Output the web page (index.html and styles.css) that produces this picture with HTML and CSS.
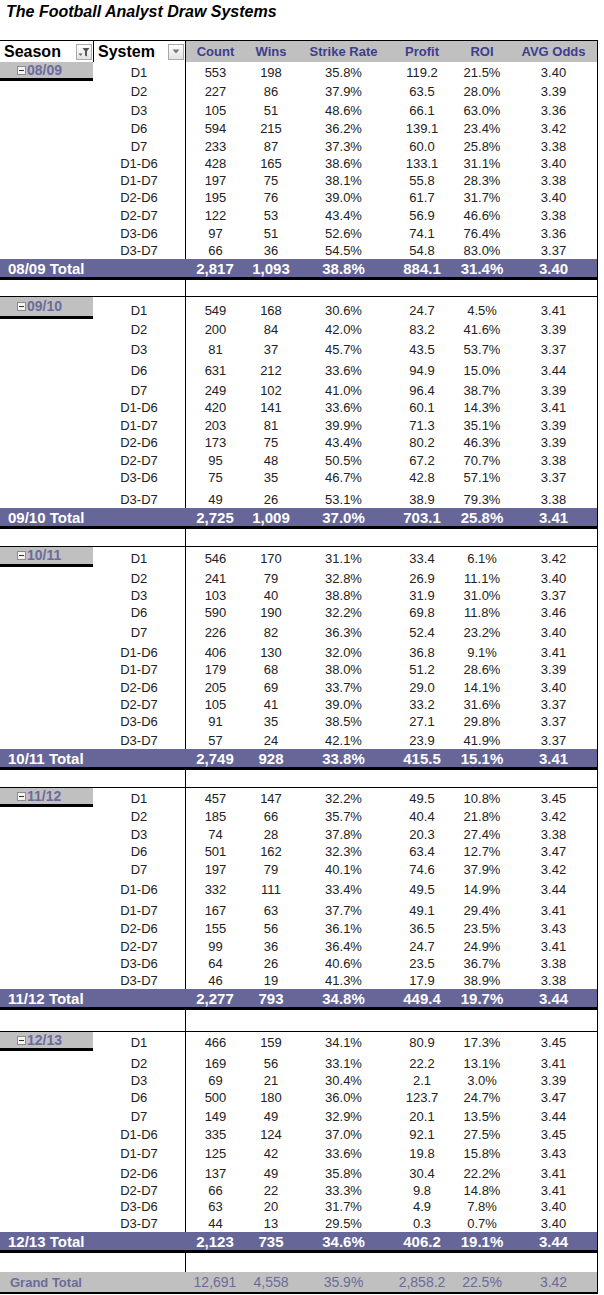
FILE: index.html
```html
<!DOCTYPE html>
<html>
<head>
<meta charset="utf-8">
<title>The Football Analyst Draw Systems</title>
<link rel="stylesheet" href="styles.css">
</head>
<body>
<div class="title">The Football Analyst Draw Systems</div>
<div class="pivot">
  <div class="head">
    <span class="hs">Season<span class="fbtn"><svg width="12" height="12" viewBox="0 0 12 12"><path d="M0.5 7.5h4l-2 2.5z" fill="#666"/><path d="M4.5 2h7L9 5.3V10.5L7 9.4V5.3z" fill="#555"/></svg></span></span>
    <span class="hs sys">System<span class="fbtn"><svg width="8" height="5" viewBox="0 0 8 5"><path d="M0.5 0.5h7L4 4.5z" fill="#7a7a7a"/></svg></span></span>
    <span class="hd first">Count</span><span class="hd">Wins</span><span class="hd">Strike Rate</span><span class="hd">Profit</span><span class="hd">ROI</span><span class="hd">AVG Odds</span>
  </div>

  <!-- 08/09 -->
  <div class="row h19"><span class="season"><i class="mbox"></i>08/09</span><span>D1</span><span>553</span><span>198</span><span>35.8%</span><span>119.2</span><span>21.5%</span><span>3.40</span></div>
  <div class="row h19"><span></span><span>D2</span><span>227</span><span>86</span><span>37.9%</span><span>63.5</span><span>28.0%</span><span>3.39</span></div>
  <div class="row h19"><span></span><span>D3</span><span>105</span><span>51</span><span>48.6%</span><span>66.1</span><span>63.0%</span><span>3.36</span></div>
  <div class="row h18"><span></span><span>D6</span><span>594</span><span>215</span><span>36.2%</span><span>139.1</span><span>23.4%</span><span>3.42</span></div>
  <div class="row h18"><span></span><span>D7</span><span>233</span><span>87</span><span>37.3%</span><span>60.0</span><span>25.8%</span><span>3.38</span></div>
  <div class="row h17"><span></span><span>D1-D6</span><span>428</span><span>165</span><span>38.6%</span><span>133.1</span><span>31.1%</span><span>3.40</span></div>
  <div class="row h17"><span></span><span>D1-D7</span><span>197</span><span>75</span><span>38.1%</span><span>55.8</span><span>28.3%</span><span>3.38</span></div>
  <div class="row h17"><span></span><span>D2-D6</span><span>195</span><span>76</span><span>39.0%</span><span>61.7</span><span>31.7%</span><span>3.40</span></div>
  <div class="row h18"><span></span><span>D2-D7</span><span>122</span><span>53</span><span>43.4%</span><span>56.9</span><span>46.6%</span><span>3.38</span></div>
  <div class="row h18"><span></span><span>D3-D6</span><span>97</span><span>51</span><span>52.6%</span><span>74.1</span><span>76.4%</span><span>3.36</span></div>
  <div class="row h17"><span></span><span>D3-D7</span><span>66</span><span>36</span><span>54.5%</span><span>54.8</span><span>83.0%</span><span>3.37</span></div>
  <div class="total"><span class="lbl">08/09 Total</span><span>2,817</span><span>1,093</span><span>38.8%</span><span>884.1</span><span>31.4%</span><span>3.40</span></div>
  <div class="blank h17"><span></span><span></span><span></span></div>

  <!-- 09/10 -->
  <div class="row h22"><span class="season"><i class="mbox"></i>09/10</span><span>D1</span><span>549</span><span>168</span><span>30.6%</span><span>24.7</span><span>4.5%</span><span>3.41</span></div>
  <div class="row h19"><span></span><span>D2</span><span>200</span><span>84</span><span>42.0%</span><span>83.2</span><span>41.6%</span><span>3.39</span></div>
  <div class="row h20"><span></span><span>D3</span><span>81</span><span>37</span><span>45.7%</span><span>43.5</span><span>53.7%</span><span>3.37</span></div>
  <div class="row h21"><span></span><span>D6</span><span>631</span><span>212</span><span>33.6%</span><span>94.9</span><span>15.0%</span><span>3.44</span></div>
  <div class="row h20"><span></span><span>D7</span><span>249</span><span>102</span><span>41.0%</span><span>96.4</span><span>38.7%</span><span>3.39</span></div>
  <div class="row h17"><span></span><span>D1-D6</span><span>420</span><span>141</span><span>33.6%</span><span>60.1</span><span>14.3%</span><span>3.41</span></div>
  <div class="row h18"><span></span><span>D1-D7</span><span>203</span><span>81</span><span>39.9%</span><span>71.3</span><span>35.1%</span><span>3.39</span></div>
  <div class="row h17"><span></span><span>D2-D6</span><span>173</span><span>75</span><span>43.4%</span><span>80.2</span><span>46.3%</span><span>3.39</span></div>
  <div class="row h18"><span></span><span>D2-D7</span><span>95</span><span>48</span><span>50.5%</span><span>67.2</span><span>70.7%</span><span>3.38</span></div>
  <div class="row h17"><span></span><span>D3-D6</span><span>75</span><span>35</span><span>46.7%</span><span>42.8</span><span>57.1%</span><span>3.37</span></div>
  <div class="row h22"><span></span><span>D3-D7</span><span>49</span><span>26</span><span>53.1%</span><span>38.9</span><span>79.3%</span><span>3.38</span></div>
  <div class="total"><span class="lbl">09/10 Total</span><span>2,725</span><span>1,009</span><span>37.0%</span><span>703.1</span><span>25.8%</span><span>3.41</span></div>
  <div class="blank h18"><span></span><span></span><span></span></div>

  <!-- 10/11 -->
  <div class="row h20"><span class="season"><i class="mbox"></i>10/11</span><span>D1</span><span>546</span><span>170</span><span>31.1%</span><span>33.4</span><span>6.1%</span><span>3.42</span></div>
  <div class="row h20"><span></span><span>D2</span><span>241</span><span>79</span><span>32.8%</span><span>26.9</span><span>11.1%</span><span>3.40</span></div>
  <div class="row h17"><span></span><span>D3</span><span>103</span><span>40</span><span>38.8%</span><span>31.9</span><span>31.0%</span><span>3.37</span></div>
  <div class="row h17"><span></span><span>D6</span><span>590</span><span>190</span><span>32.2%</span><span>69.8</span><span>11.8%</span><span>3.46</span></div>
  <div class="row h20"><span></span><span>D7</span><span>226</span><span>82</span><span>36.3%</span><span>52.4</span><span>23.2%</span><span>3.40</span></div>
  <div class="row h20"><span></span><span>D1-D6</span><span>406</span><span>130</span><span>32.0%</span><span>36.8</span><span>9.1%</span><span>3.41</span></div>
  <div class="row h17"><span></span><span>D1-D7</span><span>179</span><span>68</span><span>38.0%</span><span>51.2</span><span>28.6%</span><span>3.39</span></div>
  <div class="row h18"><span></span><span>D2-D6</span><span>205</span><span>69</span><span>33.7%</span><span>29.0</span><span>14.1%</span><span>3.40</span></div>
  <div class="row h17"><span></span><span>D2-D7</span><span>105</span><span>41</span><span>39.0%</span><span>33.2</span><span>31.6%</span><span>3.37</span></div>
  <div class="row h17"><span></span><span>D3-D6</span><span>91</span><span>35</span><span>38.5%</span><span>27.1</span><span>29.8%</span><span>3.37</span></div>
  <div class="row h19"><span></span><span>D3-D7</span><span>57</span><span>24</span><span>42.1%</span><span>23.9</span><span>41.9%</span><span>3.37</span></div>
  <div class="total"><span class="lbl">10/11 Total</span><span>2,749</span><span>928</span><span>33.8%</span><span>415.5</span><span>15.1%</span><span>3.41</span></div>
  <div class="blank h18"><span></span><span></span><span></span></div>

  <!-- 11/12 -->
  <div class="row h19"><span class="season"><i class="mbox"></i>11/12</span><span>D1</span><span>457</span><span>147</span><span>32.2%</span><span>49.5</span><span>10.8%</span><span>3.45</span></div>
  <div class="row h18"><span></span><span>D2</span><span>185</span><span>66</span><span>35.7%</span><span>40.4</span><span>21.8%</span><span>3.42</span></div>
  <div class="row h18"><span></span><span>D3</span><span>74</span><span>28</span><span>37.8%</span><span>20.3</span><span>27.4%</span><span>3.38</span></div>
  <div class="row h17"><span></span><span>D6</span><span>501</span><span>162</span><span>32.3%</span><span>63.4</span><span>12.7%</span><span>3.47</span></div>
  <div class="row h18"><span></span><span>D7</span><span>197</span><span>79</span><span>40.1%</span><span>74.6</span><span>37.9%</span><span>3.42</span></div>
  <div class="row h20"><span></span><span>D1-D6</span><span>332</span><span>111</span><span>33.4%</span><span>49.5</span><span>14.9%</span><span>3.44</span></div>
  <div class="row h21"><span></span><span>D1-D7</span><span>167</span><span>63</span><span>37.7%</span><span>49.1</span><span>29.4%</span><span>3.41</span></div>
  <div class="row h18"><span></span><span>D2-D6</span><span>155</span><span>56</span><span>36.1%</span><span>36.5</span><span>23.5%</span><span>3.43</span></div>
  <div class="row h18"><span></span><span>D2-D7</span><span>99</span><span>36</span><span>36.4%</span><span>24.7</span><span>24.9%</span><span>3.41</span></div>
  <div class="row h17"><span></span><span>D3-D6</span><span>64</span><span>26</span><span>40.6%</span><span>23.5</span><span>36.7%</span><span>3.38</span></div>
  <div class="row h17"><span></span><span>D3-D7</span><span>46</span><span>19</span><span>41.3%</span><span>17.9</span><span>38.9%</span><span>3.38</span></div>
  <div class="total"><span class="lbl">11/12 Total</span><span>2,277</span><span>793</span><span>34.8%</span><span>449.4</span><span>19.7%</span><span>3.44</span></div>
  <div class="blank h22"><span></span><span></span><span></span></div>

  <!-- 12/13 -->
  <div class="row h19"><span class="season"><i class="mbox"></i>12/13</span><span>D1</span><span>466</span><span>159</span><span>34.1%</span><span>80.9</span><span>17.3%</span><span>3.45</span></div>
  <div class="row h21"><span></span><span>D2</span><span>169</span><span>56</span><span>33.1%</span><span>22.2</span><span>13.1%</span><span>3.41</span></div>
  <div class="row h17"><span></span><span>D3</span><span>69</span><span>21</span><span>30.4%</span><span>2.1</span><span>3.0%</span><span>3.39</span></div>
  <div class="row h17"><span></span><span>D6</span><span>500</span><span>180</span><span>36.0%</span><span>123.7</span><span>24.7%</span><span>3.47</span></div>
  <div class="row h19"><span></span><span>D7</span><span>149</span><span>49</span><span>32.9%</span><span>20.1</span><span>13.5%</span><span>3.44</span></div>
  <div class="row h18"><span></span><span>D1-D6</span><span>335</span><span>124</span><span>37.0%</span><span>92.1</span><span>27.5%</span><span>3.45</span></div>
  <div class="row h19"><span></span><span>D1-D7</span><span>125</span><span>42</span><span>33.6%</span><span>19.8</span><span>15.8%</span><span>3.43</span></div>
  <div class="row h20"><span></span><span>D2-D6</span><span>137</span><span>49</span><span>35.8%</span><span>30.4</span><span>22.2%</span><span>3.41</span></div>
  <div class="row h17"><span></span><span>D2-D7</span><span>66</span><span>22</span><span>33.3%</span><span>9.8</span><span>14.8%</span><span>3.41</span></div>
  <div class="row h16"><span></span><span>D3-D6</span><span>63</span><span>20</span><span>31.7%</span><span>4.9</span><span>7.8%</span><span>3.40</span></div>
  <div class="row h17"><span></span><span>D3-D7</span><span>44</span><span>13</span><span>29.5%</span><span>0.3</span><span>0.7%</span><span>3.40</span></div>
  <div class="total"><span class="lbl">12/13 Total</span><span>2,123</span><span>735</span><span>34.6%</span><span>406.2</span><span>19.1%</span><span>3.44</span></div>
  <div class="blank last h19"><span></span><span></span><span></span></div>

  <div class="grand"><span class="lbl">Grand Total</span><span>12,691</span><span>4,558</span><span>35.9%</span><span>2,858.2</span><span>22.5%</span><span>3.42</span></div>
</div>
</body>
</html>
```

FILE: styles.css
```css
* { box-sizing: border-box; margin: 0; padding: 0; }
body {
  margin: 0;
  width: 604px;
  background: #fff;
  color: #222;
  font-family: "Liberation Sans", Arial, sans-serif;
}
.title {
  height: 40px;
  padding: 3px 0 0 6px;
  font-size: 16px;
  line-height: 18px;
  font-weight: bold;
  font-style: italic;
  color: #000;
}
.pivot {
  width: 598px;
  border-right: 1px solid #000;
}
.head, .row, .total, .blank, .grand {
  display: grid;
  grid-template-columns: 93px 92px 60px 52px 93px 64px 56px 87px;
}
.h16 { height: 16px; }
.h17 { height: 17px; }
.h18 { height: 18px; }
.h19 { height: 19px; }
.h20 { height: 20px; }
.h21 { height: 21px; }
.h22 { height: 22px; }

/* header */
.head {
  height: 22px;
  border-top: 1px solid #000;
}
.hs {
  display: flex;
  align-items: center;
  padding-left: 4px;
  font-size: 16px;
  font-weight: bold;
  color: #000;
}
.hs.sys { border-left: 1px solid #000; }
.hd {
  display: flex;
  align-items: center;
  justify-content: center;
  background: #c0c0c0;
  color: #3d3d8f;
  font-size: 13px;
  font-weight: bold;
}
.hd.first { border-left: 1px solid #000; }
.fbtn {
  margin-left: auto;
  margin-right: 1px;
  width: 16px;
  height: 16px;
  border: 1px solid #a9a9a9;
  background: linear-gradient(#ffffff, #e2e2e2);
  display: flex;
  align-items: center;
  justify-content: center;
}

/* data rows */
.row > span {
  display: flex;
  align-items: flex-end;
  justify-content: center;
  padding-bottom: 1px;
  font-size: 13px;
  line-height: 15px;
}
.row > span:nth-child(3),
.blank > span:nth-child(3) { border-left: 1px solid #000; }
.row > span.season {
  align-items: center;
  justify-content: flex-start;
  padding: 0 0 0 17px;
  background: #c0c0c0;
  border-bottom: 3px solid #000;
  color: #6b6b9e;
  font-size: 14px;
  font-weight: bold;
}
.mbox {
  display: inline-flex;
  align-items: center;
  justify-content: center;
  width: 9px;
  height: 9px;
  margin-right: 1px;
  border: 1px solid #8c8c8c;
  background: #f2f2f2;
}
.mbox::before {
  content: "";
  width: 5px;
  height: 1px;
  background: #333;
}

/* totals */
.total {
  height: 21px;
  background: #666699;
  border-bottom: 3px solid #000;
  color: #fff;
  font-size: 15px;
  font-weight: bold;
}
.total > span, .grand > span {
  display: flex;
  align-items: center;
  justify-content: center;
}
.total .lbl, .grand .lbl {
  grid-column: span 2;
  justify-content: flex-start;
  padding-left: 8px;
}
.blank { border-bottom: 1px solid #000; }
.blank.last { border-bottom: 0; }
.grand {
  height: 22px;
  background: #c0c0c0;
  border-bottom: 2px solid #000;
  color: #6b6b9b;
  font-size: 14px;
}
.grand .lbl {
  padding-left: 10px;
  font-size: 13px;
  font-weight: bold;
}
```
